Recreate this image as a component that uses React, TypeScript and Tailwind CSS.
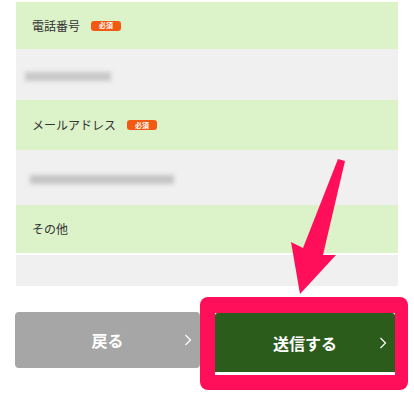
import React from "react";

const font = { fontFamily: '"Noto Sans CJK JP", "Noto Sans", sans-serif' };

function Badge() {
  return (
    <span className="ml-[11px] inline-flex h-[10px] w-[30px] items-center justify-center rounded-[3px] bg-[#f25a14] text-[7px] leading-none font-bold text-white">
      必須
    </span>
  );
}

function Chevron() {
  return (
    <svg width="8" height="12" viewBox="0 0 8 12" className="absolute right-[8px] top-1/2 -translate-y-1/2">
      <polyline points="1.5,1 6.5,6 1.5,11" fill="none" stroke="#ffffff" strokeWidth="1.2" />
    </svg>
  );
}

export default function App() {
  return (
    <div className="relative h-[400px] w-[414px] overflow-hidden bg-white" style={font}>
      <div className="ml-[16px] w-[382px] pt-[2px]">
        <div className="flex h-[47px] items-center bg-[#dcf2c9] pl-[16px] text-[12px] text-[#333]">
          電話番号
          <Badge />
        </div>
        <div className="flex h-[51px] items-center bg-[#f0f0f0] pl-[9px] pt-[4px]">
          <div className="h-[9px] w-[86px] bg-[#c8c8c8] blur-[2px]" />
        </div>
        <div className="flex h-[50px] items-center bg-[#dcf2c9] pl-[16px] text-[12px] text-[#333]">
          メールアドレス
          <Badge />
        </div>
        <div className="flex h-[55px] items-center bg-[#f0f0f0] pl-[14px] pt-[4px]">
          <div className="h-[9px] w-[144px] bg-[#c4c4c4] blur-[2px]" />
        </div>
        <div className="flex h-[48px] items-center bg-[#dcf2c9] pl-[16px] text-[12px] text-[#333]">
          その他
        </div>
        <div className="h-[2px] bg-white" />
        <div className="h-[31px] bg-[#f0f0f0]" />
      </div>

      <div className="mt-[11px] flex">
        <div className="ml-[15px] mt-[15px] flex h-[56px] w-[185px]">
          <div className="relative flex h-full w-full items-center justify-center rounded-[4px] bg-[#a6a6a6] text-[16px] font-bold text-white">
            戻る
            <Chevron />
          </div>
        </div>
        <div className="h-[93px] w-[208px] rounded-[8px] bg-[#ff0f5a] pl-[15px] pr-[13px] pt-[16px]">
          <div className="bg-white pb-[3px]">
            <div className="relative flex h-[59px] items-center justify-center rounded-t-[3px] bg-[#2c5c1c] text-[16px] font-bold text-white">
              送信する
              <Chevron />
            </div>
          </div>
        </div>
      </div>

      <svg className="pointer-events-none absolute left-0 top-0" width="414" height="400" viewBox="0 0 414 400">
        <polygon
          points="338,159 345,161 323,255 336,255 300,294 291,242 303,248"
          fill="#ff0f5a"
          strokeLinejoin="round"
        />
      </svg>
    </div>
  );
}
